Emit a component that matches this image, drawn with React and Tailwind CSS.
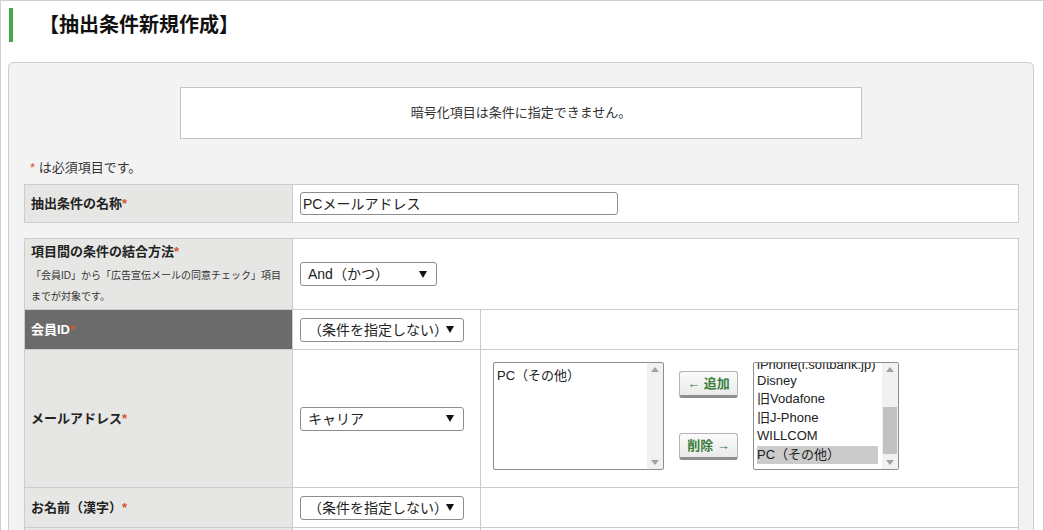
const Req = () => <span className="text-[#d9542b]">*</span>;

function Arrow() {
  return (
    <svg width="8" height="7" viewBox="0 0 8 7" className="shrink-0">
      <polygon points="0,0 8,0 4,7" fill="#111" />
    </svg>
  );
}

function Select({ w, children }) {
  return (
    <div className={`flex h-[24px] items-center justify-between rounded-[3px] border border-[#8d8d8d] bg-white pl-[7px] pr-[9px] text-[14px] leading-none text-[#222] ${w}`}>
      <span>{children}</span>
      <Arrow />
    </div>
  );
}

function ScrollArrow({ up }) {
  return (
    <svg width="8" height="5" viewBox="0 0 8 5">
      <polygon points={up ? "4,0 8,5 0,5" : "0,0 8,0 4,5"} fill="#a3a3a3" />
    </svg>
  );
}

function Scrollbar({ thumb }) {
  return (
    <div className="flex w-[16px] shrink-0 flex-col items-center bg-[#f1f1f1] py-[4px]">
      <ScrollArrow up />
      <div className="flex-1" />
      {thumb ? <div className="mb-[6px] h-[47px] w-[14px] bg-[#c1c1c1]" /> : null}
      <ScrollArrow />
    </div>
  );
}

function MoveButton({ children }) {
  return (
    <div className="flex h-[27px] w-[59px] items-center justify-center rounded-[3px] border border-[#b4b4b4] border-b-[3px] border-b-[#8e8e8e] bg-gradient-to-b from-[#fbfbfb] to-[#eaeaea] text-[13px] font-bold leading-none text-[#3b7d3b]">
      {children}
    </div>
  );
}

export default function App() {
  const rightItems = ["iPhone(i.softbank.jp)", "Disney", "旧Vodafone", "旧J-Phone", "WILLCOM", "PC（その他）"];
  return (
    <div className="h-[530px] w-[1044px] overflow-hidden border-l border-r border-t border-[#cfcfcf] bg-white font-['Liberation_Sans','Noto_Sans_CJK_JP',sans-serif] text-[#222]">
      <div className="ml-[8px] mt-[7px] flex h-[34px] items-center border-l-[4px] border-[#46a846] pl-[26px]">
        <h1 className="text-[20px] font-bold leading-none text-[#111]">【抽出条件新規作成】</h1>
      </div>

      <div className="ml-[7px] mt-[20px] w-[1026px] rounded-t-[5px] border border-[#cccccc] bg-[#f3f3f3] px-[15px] pt-[24px] pb-[20px]">
        <div className="mx-auto flex h-[52px] w-[682px] items-center justify-center border border-[#c4c4c4] bg-white text-[13px] text-[#333]">
          暗号化項目は条件に指定できません。
        </div>

        <p className="mt-[20px] mb-[7px] pl-[6px] text-[13px] leading-[18px] text-[#333]">
          <Req /> は必須項目です。
        </p>

        <table className="w-[995px] table-fixed border-collapse">
          <colgroup>
            <col className="w-[268px]" />
            <col />
          </colgroup>
          <tbody>
            <tr className="h-[38px]">
              <td className="border border-[#cccccc] bg-[#e6e7e5] pl-[6px] text-[13px] font-bold">
                抽出条件の名称<Req />
              </td>
              <td className="border border-[#cccccc] bg-white pl-[7px]">
                <div className="flex h-[23px] w-[318px] items-center rounded-[3px] border border-[#8d8d8d] bg-white px-[2px] text-[14px] leading-none">
                  PCメールアドレス
                </div>
              </td>
            </tr>
          </tbody>
        </table>

        <table className="mt-[15px] w-[995px] table-fixed border-collapse">
          <colgroup>
            <col className="w-[268px]" />
            <col className="w-[188px]" />
            <col />
          </colgroup>
          <tbody>
            <tr className="h-[71px]">
              <td className="border border-[#cccccc] bg-[#e6e7e5] pl-[6px] pt-[4px] align-top">
                <div className="text-[13px] font-bold leading-[18px]">
                  項目間の条件の結合方法<Req />
                </div>
                <div className="mt-[4px] text-[10px] leading-[21px] text-[#333]">
                  「会員ID」から「広告宣伝メールの同意チェック」項目
                  <br />
                  までが対象です。
                </div>
              </td>
              <td colSpan={2} className="border border-[#cccccc] bg-white pl-[7px]">
                <Select w="w-[137px]">And（かつ）</Select>
              </td>
            </tr>
            <tr className="h-[40px]">
              <td className="border border-[#cccccc] bg-[#6b6b6b] pl-[6px] text-[13px] font-bold text-white">
                会員ID<Req />
              </td>
              <td className="border border-[#cccccc] bg-white pl-[7px]">
                <Select w="w-[164px]">（条件を指定しない）</Select>
              </td>
              <td className="border border-[#cccccc] bg-white" />
            </tr>
            <tr className="h-[138px]">
              <td className="border border-[#cccccc] bg-[#e6e7e5] pl-[6px] text-[13px] font-bold">
                メールアドレス<Req />
              </td>
              <td className="border border-[#cccccc] bg-white pl-[7px]">
                <Select w="w-[164px]">キャリア</Select>
              </td>
              <td className="border border-[#cccccc] bg-white pl-[12px]">
                <div className="flex items-center gap-[15px] pb-[6px]">
                  <div className="flex h-[108px] w-[171px] overflow-hidden rounded-[2px] border border-[#8d8d8d] bg-white">
                    <div className="flex-1 pl-[3px] pt-[4px] text-[13px] leading-[18px]">PC（その他）</div>
                    <Scrollbar />
                  </div>
                  <div className="flex h-[108px] flex-col justify-between pt-[9px] pb-[10px]">
                    <MoveButton>← 追加</MoveButton>
                    <MoveButton>削除 →</MoveButton>
                  </div>
                  <div className="flex h-[108px] w-[146px] overflow-hidden rounded-[2px] border border-[#8d8d8d] bg-white">
                    <div className="flex-1 overflow-hidden pl-[3px] pr-[4px]">
                      <div className="mt-[-9.5px]">
                        {rightItems.map((it, i) => (
                          <div
                            key={it}
                            className={`h-[18.5px] whitespace-nowrap text-[13px] leading-[18.5px] ${i === 0 ? "pt-[3px]" : ""} ${i === rightItems.length - 1 ? "bg-[#cbcbcb]" : ""}`}
                          >
                            {it}
                          </div>
                        ))}
                      </div>
                    </div>
                    <Scrollbar thumb />
                  </div>
                </div>
              </td>
            </tr>
            <tr className="h-[40px]">
              <td className="border border-[#cccccc] bg-[#e6e7e5] pl-[6px] text-[13px] font-bold">
                お名前（漢字）<Req />
              </td>
              <td className="border border-[#cccccc] bg-white pl-[7px]">
                <Select w="w-[164px]">（条件を指定しない）</Select>
              </td>
              <td className="border border-[#cccccc] bg-white" />
            </tr>
            <tr className="h-[40px]">
              <td className="border border-[#cccccc] bg-[#e6e7e5]" />
              <td className="border border-[#cccccc] bg-white" />
              <td className="border border-[#cccccc] bg-white" />
            </tr>
          </tbody>
        </table>
      </div>
    </div>
  );
}
